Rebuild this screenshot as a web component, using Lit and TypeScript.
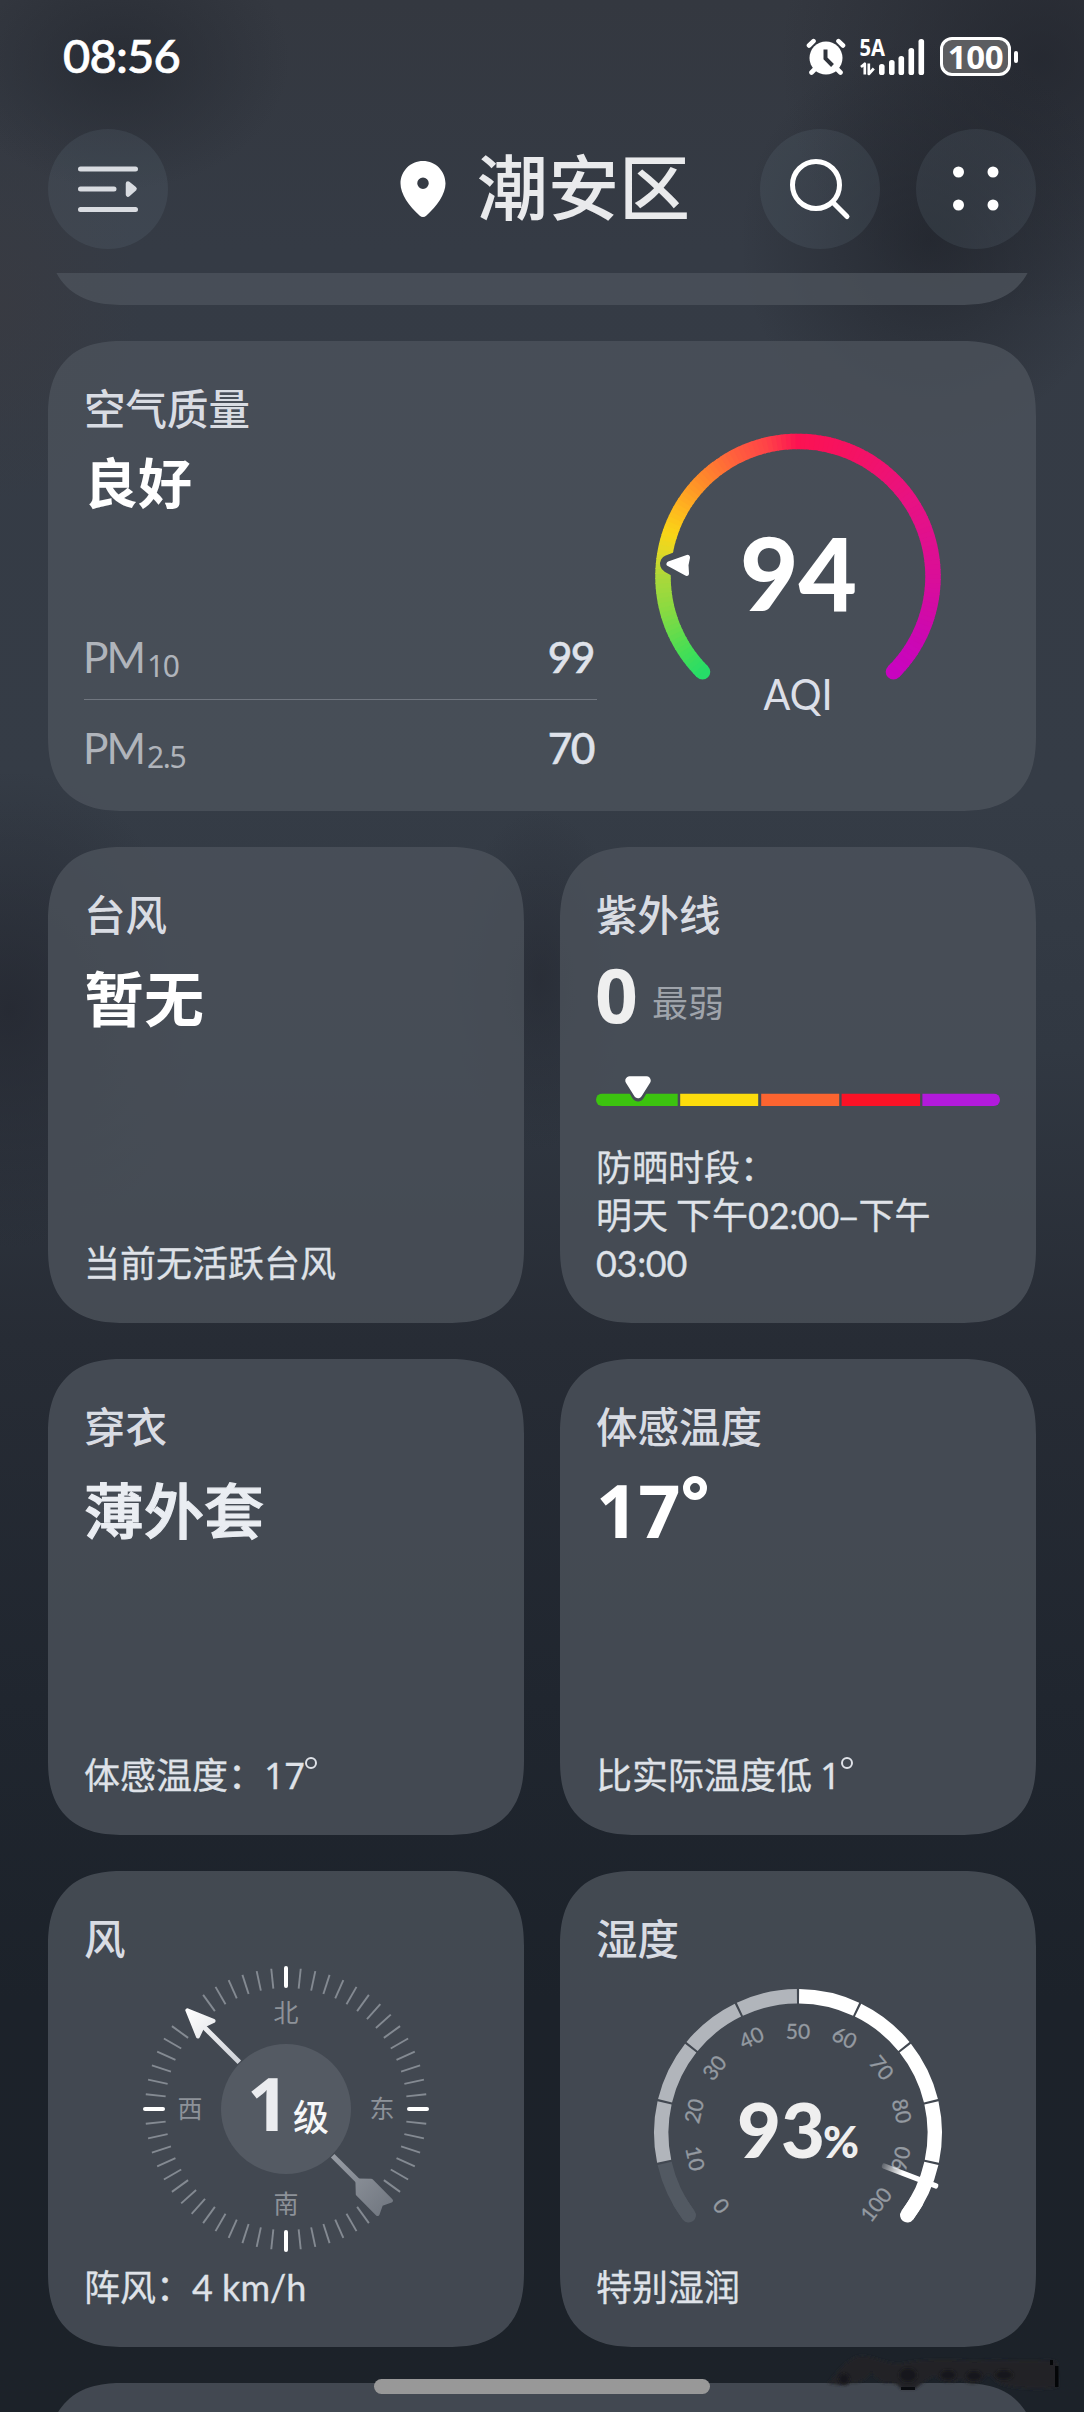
import { LitElement, html, css, svg } from "lit";
import { customElement, property } from "lit/decorators.js";

const CJK = css`"Noto Sans CJK SC", sans-serif`;

/** Point on a circle; the angle is in degrees, clockwise from north. */
const polar = (r: number, deg: number): [number, number] => {
  const a = (deg * Math.PI) / 180;
  return [r * Math.sin(a), -r * Math.cos(a)];
};

const arc = (r: number, from: number, to: number): string => {
  const [x1, y1] = polar(r, from);
  const [x2, y2] = polar(r, to);
  return `M${x1.toFixed(2)} ${y1.toFixed(2)}A${r} ${r} 0 ${to - from > 180 ? 1 : 0} 1 ${x2.toFixed(2)} ${y2.toFixed(2)}`;
};

const cardBase = css`
  .card {
    box-sizing: border-box;
    display: flex;
    flex-direction: column;
    background: rgba(76, 83, 91, 0.8);
    border-radius: 63px;
    height: 476px;
    padding: 38px 36px 38px;
  }
  @supports (corner-shape: superellipse(1.3)) {
    .card {
      border-radius: 75px;
      corner-shape: superellipse(1.3);
    }
  }
  .title {
    font-size: 41.5px;
    line-height: 56px;
    font-weight: 500;
    color: #d9dce3;
  }
  .value {
    font-size: 60px;
    line-height: 72px;
    font-weight: 700;
    color: #fff;
    margin-top: 19px;
  }
  .caption {
    font-size: 36px;
    line-height: 48px;
    color: #dfe2e8;
    margin-top: auto;
    -webkit-text-stroke: 0.3px #dfe2e8;
  }
  .digits {
    line-height: 0;
  }
`;

@customElement("status-bar")
class StatusBar extends LitElement {
  static styles = css`
    :host {
      display: flex;
      align-items: center;
      justify-content: space-between;
      height: 113px;
      padding: 0 66px 0 63px;
      color: #fff;
      box-sizing: border-box;
    }
    .time {
      font: 500 47px/60px Lato, sans-serif;
      letter-spacing: -0.8px;
      -webkit-text-stroke: 0.7px #fff;
      position: relative;
      top: -2px;
    }
    .icons {
      display: flex;
      align-items: center;
    }
    .signal {
      margin: 0 14px 0 14px;
      overflow: visible;
    }
    .net {
      font: 700 23.5px "Noto Sans", sans-serif;
    }
    .battery {
      box-sizing: border-box;
      width: 71px;
      height: 39px;
      border: 3px solid #fff;
      border-radius: 12px;
      background: #5c5d60;
      font: 700 33px/33px "Noto Sans", sans-serif;
      text-align: center;
      letter-spacing: -0.4px;
    }
    .nub {
      width: 4px;
      height: 12px;
      border-radius: 2px;
      background: #fff;
      margin-left: 3px;
    }
  `;
  render() {
    const bars = [[19, 25, 11], [29, 21, 15], [38.5, 17, 19], [48.5, 9, 27], [58.5, 0, 36]];
    return html`
      <span class="time">08:56</span>
      <div class="icons">
        <svg width="40" height="38" viewBox="0 0 40 38">
          <g stroke="#fff" stroke-width="4.6" stroke-linecap="round">
            <path d="M3 7.5L7.5 3.2M37 7.5L32.500 3.2M9 31L5.500 34.500M31 31L34.500 34.500" />
          </g>
          <circle cx="20" cy="20" r="16.500" fill="#fff" />
          <path d="M19.500 11.500V20.500L26.500 27.500" fill="none" stroke="#30343c" stroke-width="4" />
        </svg>
        <svg class="signal" width="66" height="62" viewBox="0 -12 66 62">
          <text class="net" x="-0.500" y="18" textLength="25.500" lengthAdjust="spacingAndGlyphs" fill="#fff">5A</text>
          <path d="M1 29L4.800 25.800V36.500M8.800 25.500V36L13.800 30.500" fill="none" stroke="#fff" stroke-width="2.700" stroke-linejoin="round" />
          ${bars.map(([x, y, h]) => svg`<rect x=${x} y=${y + 1} width="5.600" height=${h} rx="2.600" fill="#fff" />`)}
        </svg>
        <div class="battery">100</div>
        <div class="nub"></div>
      </div>
    `;
  }
}

@customElement("city-header")
class CityHeader extends LitElement {
  static styles = css`
    :host {
      display: flex;
      align-items: center;
      padding: 16px 48px 24px;
    }
    .round {
      width: 120px;
      height: 120px;
      border-radius: 50%;
      background: rgba(120, 140, 155, 0.14);
    }
    .city {
      flex: 1;
      display: flex;
      align-items: center;
      justify-content: flex-end;
      gap: 31px;
      margin-right: 70px;
    }
    .name {
      font: 500 71px/100px ${CJK};
      color: #e9eaec;
      position: relative;
      top: -6px;
    }
    .more {
      margin-left: 36px;
    }
    svg {
      display: block;
    }
  `;
  render() {
    return html`
      <div class="round">
        <svg width="120" height="120" viewBox="0 0 120 120">
          <path d="M32.500 40H87.500M32.500 60H66M32.500 80.500H87.500" stroke="#d9dce1" stroke-width="5" stroke-linecap="round" />
          <path d="M80 54.500L86.500 59.800L80 65.500Z" fill="#d9dce1" stroke="#d9dce1" stroke-width="4.500" stroke-linejoin="round" />
        </svg>
      </div>
      <div class="city">
        <svg width="46" height="58" viewBox="0 0 46 58">
          <path
            fill="#fff"
            fill-rule="evenodd"
            d="M23 1C10.500 1 .5 11 .5 23.500C.5 34 9 46 19.500 55.500C21.800 57.500 24.200 57.500 26.500 55.500C37 46 45.500 34 45.500 23.500C45.500 11 35.500 1 23 1ZM23 17.500A5.700 5.700 0 1 1 23 29A5.700 5.700 0 1 1 23 17.500Z"
          />
        </svg>
        <span class="name">潮安区</span>
      </div>
      <div class="round">
        <svg width="120" height="120" viewBox="0 0 120 120" fill="none" stroke="#fff" stroke-width="5" stroke-linecap="round">
          <circle cx="56" cy="56" r="23.500" />
          <path d="M73 73.500L87 87.500" />
        </svg>
      </div>
      <div class="round more">
        <svg width="120" height="120" viewBox="0 0 120 120" fill="#fff">
          <circle cx="42.500" cy="43" r="5.500" /><circle cx="77" cy="43" r="5.500" />
          <circle cx="42.500" cy="76" r="5.500" /><circle cx="77" cy="76" r="5.500" />
        </svg>
      </div>
    `;
  }
}

const AQI_STOPS: [number, number[]][] = [
  [0, [38, 220, 104]],
  [12, [72, 222, 84]],
  [30, [136, 218, 66]],
  [45, [172, 216, 58]],
  [56, [228, 216, 36]],
  [64, [250, 212, 22]],
  [76, [255, 178, 32]],
  [90, [255, 138, 42]],
  [106, [255, 98, 60]],
  [122, [255, 66, 72]],
  [135, [252, 18, 82]],
  [160, [244, 18, 100]],
  [190, [232, 18, 130]],
  [225, [218, 14, 152]],
  [250, [204, 8, 176]],
  [270, [200, 4, 192]],
];

const aqiColor = (t: number): string => {
  let i = 1;
  while (i < AQI_STOPS.length - 1 && AQI_STOPS[i][0] < t) i++;
  const [a, ca] = AQI_STOPS[i - 1];
  const [b, cb] = AQI_STOPS[i];
  const k = Math.min(1, Math.max(0, (t - a) / (b - a)));
  return `rgb(${ca.map((v, n) => Math.round(v + (cb[n] - v) * k)).join(",")})`;
};

@customElement("air-quality-card")
class AirQualityCard extends LitElement {
  static styles = [
    cardBase,
    css`
      :host {
        display: block;
        font-family: ${CJK};
      }
      .card {
        height: 470px;
        flex-direction: row;
        padding: 38px 37px 16px 36px;
      }
      .left {
        width: 513px;
        display: flex;
        flex-direction: column;
      }
      .value {
        font-size: 54px;
        line-height: 60px;
        margin-top: 16px;
      }
      .rows {
        margin-top: auto;
      }
      .row {
        display: flex;
        justify-content: space-between;
        height: 84px;
        line-height: 84px;
        padding: 0 3px 0 0;
        font-family: Lato, sans-serif;
        font-size: 42.5px;
        color: #b0b4bb;
      }
      .pm {
        letter-spacing: -2px;
        margin-left: -1px;
      }
      .row + .row {
        border-top: 1px solid #70767f;
        height: 95px;
        line-height: 95px;
      }
      .sub {
        font: 30px/30px "Noto Sans", sans-serif;
        letter-spacing: -1.3px;
        position: relative;
        top: 4px;
        margin-left: 3px;
      }
      .num {
        color: #dfe2ea;
        font-weight: 500;
        letter-spacing: -1.5px;
        -webkit-text-stroke: 0.5px #dfe2ea;
      }
      .gauge {
        flex: 1;
        display: flex;
        justify-content: center;
        margin-top: 42px;
      }
      .big {
        font: 900 101px Lato, sans-serif;
      }
      .unit {
        font: 43px Lato, sans-serif;
      }
    `,
  ];
  render() {
    const steps = Array.from({ length: 135 }, (_, i) => i * 2);
    return html`
      <div class="card">
        <div class="left">
          <div class="title">空气质量</div>
          <div class="value">良好</div>
          <div class="rows">
            <div class="row"><span class="pm">PM<span class="sub">10</span></span><span class="num">99</span></div>
            <div class="row"><span class="pm">PM<span class="sub">2.5</span></span><span class="num">70</span></div>
          </div>
        </div>
        <div class="gauge">
          <svg width="300" height="300" viewBox="-150 -155.400 300 300">
            <defs>
              <mask id="cut" maskUnits="userSpaceOnUse" x="-150" y="-150" width="300" height="300">
                <rect x="-150" y="-150" width="300" height="300" fill="#fff" />
                <path d="M-129 -12.500L-111 -19.500L-111 -2.500Z" fill="#000" stroke="#000" stroke-width="18" stroke-linejoin="round" />
              </mask>
            </defs>
            <g mask="url(#cut)" fill="none" stroke-width="15.500">
              <path d=${arc(135, -135, -134.500)} stroke=${aqiColor(0)} stroke-linecap="round" />
              <path d=${arc(135, 134.500, 135)} stroke=${aqiColor(270)} stroke-linecap="round" />
              ${steps.map((t) => svg`<path d=${arc(135, t - 135, Math.min(135, t - 132.6))} stroke=${aqiColor(t + 1)} />`)}
            </g>
            <path d="M-129 -12.500L-110.500 -19L-112 -11.500L-111.500 -3Z" fill="#fff" stroke="#fff" stroke-width="5" stroke-linejoin="round" />
            <text class="big" x="0.500" y="34.500" text-anchor="middle" fill="#fff">94</text>
            <text class="unit" x="0" y="134" text-anchor="middle" textLength="69" lengthAdjust="spacingAndGlyphs" fill="#dcdfe8">AQI</text>
          </svg>
        </div>
      </div>
    `;
  }
}

@customElement("info-card")
class InfoCard extends LitElement {
  @property() heading = "";
  @property() value = "";
  @property() caption = "";
  @property({ type: Boolean }) degrees = false;
  @property({ type: Boolean }) soft = false;
  static styles = [
    cardBase,
    css`
      :host {
        display: block;
        font-family: ${CJK};
      }
      .number {
        font-family: "Noto Sans", sans-serif;
        font-size: 74px;
        position: relative;
        top: 2px;
      }
      .soft {
        color: #eaedf2;
        font-weight: 500;
        -webkit-text-stroke: 1.2px #eaedf2;
      }
      .deg {
        display: inline-block;
        box-sizing: border-box;
        width: 24px;
        height: 24px;
        border: 7.2px solid #fff;
        border-radius: 50%;
        vertical-align: 38.5px;
        margin-left: 2px;
      }
      .small-deg {
        display: inline-block;
        box-sizing: border-box;
        width: 12px;
        height: 12px;
        border: 2.500px solid #dfe2e8;
        border-radius: 50%;
        position: relative;
        top: -20px;
        margin-left: 0;
      }
      .digits {
        font-family: "Noto Sans", sans-serif;
      }
    `,
  ];
  render() {
    const [text, digits] = this.caption.split("|");
    return html`
      <div class="card">
        <div class="title">${this.heading}</div>
        <div class="value ${this.degrees ? "number" : ""} ${this.soft ? "soft" : ""}">${this.value}${this.degrees ? html`<i class="deg"></i>` : ""}</div>
        <div class="caption">${text}${digits ? html`<span class="digits">${digits}</span><i class="small-deg"></i>` : ""}</div>
      </div>
    `;
  }
}

@customElement("uv-card")
class UvCard extends LitElement {
  static styles = [
    cardBase,
    css`
      :host {
        display: block;
        font-family: ${CJK};
      }
      .reading {
        display: flex;
        align-items: baseline;
        gap: 13px;
        margin-top: 10px;
        height: 86px;
        line-height: 86px;
      }
      .index {
        font: 700 75px/86px "Noto Sans", sans-serif;
        color: #efefef;
        margin-left: -1px;
      }
      .level {
        font-size: 36px;
        color: #9fa4ab;
        position: relative;
        top: -6px;
        left: 1px;
      }
      .scale {
        margin-top: 37px;
        display: block;
      }
      .caption {
        white-space: nowrap;
      }
      .digits {
        font-family: Lato, "Noto Sans", sans-serif;
        letter-spacing: -0.3px;
      }
    `,
  ];
  render() {
    const bands: [number, number, string][] = [
      [0, 81.7, "#3cc30f"],
      [84.2, 78, "#fcdc0c"],
      [165.2, 78, "#fc6430"],
      [245.6, 78.5, "#fb1226"],
      [326.4, 78, "#b21adb"],
    ];
    return html`
      <div class="card">
        <div class="title">紫外线</div>
        <div class="reading"><span class="index">0</span><span class="level">最弱</span></div>
        <svg class="scale" width="404" height="34" viewBox="0 0 404 34">
          <defs>
            <clipPath id="pill"><rect x="0" y="19.500" width="404" height="12.500" rx="6.200" /></clipPath>
            <mask id="notch" maskUnits="userSpaceOnUse" x="0" y="0" width="404" height="34">
              <rect width="404" height="34" fill="#fff" />
              <path d="M33.500 6.500H50.500L42 21Z" fill="#000" stroke="#000" stroke-width="13" stroke-linejoin="round" />
            </mask>
          </defs>
          <g clip-path="url(#pill)" mask="url(#notch)">
            ${bands.map(([x, w, c]) => svg`<rect x=${x} y="19.500" width=${w} height="12.500" fill=${c} />`)}
          </g>
          <path d="M33.500 6.500H50.500L42 20Z" fill="#fff" stroke="#fff" stroke-width="8.500" stroke-linejoin="round" />
        </svg>
        <div class="caption">防晒时段：<br />明天 下午<span class="digits">02:00</span>–下午<br /><span class="digits">03:00</span></div>
      </div>
    `;
  }
}

@customElement("wind-card")
class WindCard extends LitElement {
  static styles = [
    cardBase,
    css`
      :host {
        display: block;
        font-family: ${CJK};
      }
      .dial {
        display: block;
        margin-top: 1px;
      }
      .dir {
        font: 25px ${CJK};
      }
      .force {
        font: 700 74px "Noto Sans", sans-serif;
      }
      .unit {
        font: 500 36px ${CJK};
      }
      .digits {
        font-family: Lato, sans-serif;
      }
    `,
  ];
  render() {
    const hidden = [132, 138, 312, 318];
    const ticks = Array.from({ length: 60 }, (_, i) => i * 6).filter((a) => a % 90 !== 0 && !hidden.includes(a));
    return html`
      <div class="card">
        <div class="title">风</div>
        <svg class="dial" width="404" height="286" viewBox="-202 -143 404 286">
          <defs>
            <linearGradient id="head" x1="0" y1="-142" x2="0" y2="-66" gradientUnits="userSpaceOnUse">
              <stop offset="0" stop-color="#fff" /><stop offset="1" stop-color="#cfd2d8" />
            </linearGradient>
            <linearGradient id="tail" x1="0" y1="66" x2="0" y2="142" gradientUnits="userSpaceOnUse">
              <stop offset="0" stop-color="#979ca4" /><stop offset="1" stop-color="#737982" />
            </linearGradient>
          </defs>
          ${ticks.map((a) => svg`<path d="M0 -141V-121" transform="rotate(${a})" stroke="#848a92" stroke-width="1.900" />`)}
          ${[0, 90, 180, 270].map((a) => svg`<path d="M0 -141V-123" transform="rotate(${a})" stroke="#fff" stroke-width="4" stroke-linecap="round" />`)}
          <circle r="65" fill="#545a63" />
          <g transform="rotate(-45)">
            <path d="M-2.500 -66V-116H2.500V-66Z" fill="url(#head)" />
            <path d="M0 -139.500L11 -113.500L0 -117.500L-11 -113.500Z" fill="url(#head)" stroke="url(#head)" stroke-width="4" stroke-linejoin="round" />
            <path d="M-2.500 66V102H2.500V66Z" fill="url(#tail)" />
            <path d="M0 101L9.500 111V139L0 134.500L-9.500 139V111Z" fill="url(#tail)" stroke="url(#tail)" stroke-width="4" stroke-linejoin="round" />
          </g>
          <g class="dir" fill="#8d9299" text-anchor="middle">
            <text x="0" y="-87.500">北</text>
            <text x="0" y="104">南</text>
            <text x="-96" y="9">西</text>
            <text x="96" y="9">东</text>
          </g>
          <text class="force" x="-39" y="22" fill="#ebecef">1</text>
          <text class="unit" x="7" y="22" fill="#f6f7f8">级</text>
        </svg>
        <div class="caption">阵风：<span class="digits">4 km/h</span></div>
      </div>
    `;
  }
}

@customElement("humidity-card")
class HumidityCard extends LitElement {
  static styles = [
    cardBase,
    css`
      :host {
        display: block;
        font-family: ${CJK};
      }
      .dial {
        display: block;
        margin-top: 1px;
      }
      .mark {
        font: 21px Lato, sans-serif;
      }
      .big {
        font: 900 76px Lato, sans-serif;
      }
      .pct {
        font: 900 43px Lato, sans-serif;
      }
    `,
  ];
  render() {
    const STEP = 25.6;
    const R = 136.8;
    const color = (i: number) => (i === 0 ? "#525962" : i < 5 ? "#b1b5bb" : "#fff");
    const marks = Array.from({ length: 11 }, (_, i) => i);
    return html`
      <div class="card">
        <div class="title">湿度</div>
        <svg class="dial" width="404" height="286" viewBox="-202 -167 404 286">
          <defs>
            <linearGradient id="needle" x1="0" y1="-90" x2="0" y2="-112" gradientUnits="userSpaceOnUse">
              <stop offset="0" stop-color="#fff" stop-opacity="0.15" /><stop offset="1" stop-color="#fff" />
            </linearGradient>
          </defs>
          <g fill="none" stroke-width="14.400">
            <path d=${arc(R, -127, -120)} stroke=${color(0)} stroke-linecap="round" />
            <path d=${arc(R, 120, 127)} stroke=${color(9)} stroke-linecap="round" />
            ${marks.slice(0, 10).map((i) => {
              const from = -128 + i * STEP;
              return svg`<path d=${arc(R, i === 0 ? -127 : from + 0.45, i === 9 ? 127 : from + STEP - 0.45)} stroke=${color(i)} />`;
            })}
          </g>
          <g class="mark" fill="#949aa1" stroke="#949aa1" stroke-width="0.300" text-anchor="middle">
            ${marks.map((i) => {
              const a = i === 0 ? -133.5 : i === 10 ? 132.5 : (i - 5) * 26;
              const [x, y] = polar(i === 5 ? 101.5 : 106, a);
              const flip = a > 95 ? -180 : a < -95 ? 180 : 0;
              const turn = (i - 5) * STEP + flip;
              return svg`<text transform="translate(${x} ${y}) rotate(${turn})" y="7.500">${i * 10}</text>`;
            })}
          </g>
          <rect x="-2.600" y="-150" width="5.200" height="60" rx="2" transform="rotate(111)" fill="url(#needle)" />
          <text class="big" x="-61" y="25" fill="#efefef">93</text>
          <text class="pct" x="25" y="25" textLength="36" lengthAdjust="spacingAndGlyphs" fill="#efefef">%</text>
        </svg>
        <div class="caption">特别湿润</div>
      </div>
    `;
  }
}

@customElement("app-root")
class AppRoot extends LitElement {
  static styles = [
    cardBase,
    css`
      :host {
        display: block;
      }
      .screen {
        position: relative;
        width: 1084px;
        height: 2412px;
        overflow: hidden;
        display: flex;
        flex-direction: column;
        background:
          radial-gradient(ellipse 190px 200px at 930px 240px, rgba(30, 33, 40, 0.65), rgba(30, 33, 40, 0)),
          radial-gradient(ellipse 260px 260px at 1040px 60px, rgba(32, 35, 43, 0.7), rgba(32, 35, 43, 0)),
          radial-gradient(ellipse 170px 130px at 120px 60px, rgba(38, 42, 50, 0.8), rgba(38, 42, 50, 0)),
          radial-gradient(ellipse 190px 240px at 10px 1010px, rgba(36, 39, 48, 0.8), rgba(36, 39, 48, 0)),
          radial-gradient(ellipse 90px 170px at 540px 980px, rgba(36, 39, 48, 0.6), rgba(36, 39, 48, 0)),
          radial-gradient(ellipse 140px 200px at 0px 300px, rgba(58, 58, 64, 0.6), rgba(58, 58, 64, 0)),
          linear-gradient(#343840 0, #353b45 250px, #353c46 800px, #313842 1050px, #272c35 1340px, #20262f 1700px, #1c222a 2000px, #1c2229 2412px);
      }
      .scroll {
        flex: 1;
        min-height: 0;
        overflow: hidden;
        padding: 0 48px;
        display: flex;
        flex-direction: column;
        gap: 36px;
      }
      .scroll > * {
        flex-shrink: 0;
      }
      .previous {
        height: 200px;
        margin-top: -168px;
      }
      .grid {
        display: grid;
        grid-template-columns: 476px 476px;
        gap: 36px;
      }
      .home {
        position: absolute;
        left: 374px;
        top: 2379px;
        width: 336px;
        height: 15px;
        border-radius: 8px;
        background: #989898;
      }
      .smudge {
        position: absolute;
        left: 814px;
        top: 2340px;
      }
    `,
  ];
  render() {
    return html`
      <div class="screen">
        <status-bar></status-bar>
        <city-header></city-header>
        <div class="scroll">
          <div class="card previous"></div>
          <air-quality-card></air-quality-card>
          <div class="grid">
            <info-card heading="台风" value="暂无" caption="当前无活跃台风"></info-card>
            <uv-card></uv-card>
            <info-card heading="穿衣" value="薄外套" caption="体感温度：|17" soft></info-card>
            <info-card heading="体感温度" value="17" caption="比实际温度低 |1" degrees></info-card>
            <wind-card></wind-card>
            <humidity-card></humidity-card>
          </div>
          <div class="card"></div>
        </div>
        <svg class="smudge" width="270" height="72" viewBox="0 0 270 72">
          <defs><filter id="soft" x="-20%" y="-50%" width="140%" height="200%"><feGaussianBlur stdDeviation="1.500" /></filter></defs>
          <path
            filter="url(#soft)"
            fill="#212226"
            d="M14 43C22 34 30 22 42 17C55 13 70 24 86 24C110 18 140 20 160 21C185 19 215 22 236 20L243 22L244 47C225 50 205 49 190 45C182 43 178 36 174 34C170 40 162 45 155 43C148 40 146 38 143 40C136 44 128 42 121 36C114 38 106 45 101 49L87 49C84 44 80 42 74 43C66 43 62 38 57 32C53 38 46 44 38 42C30 47 20 44 14 43Z"
          />
          <g filter="url(#soft)" fill="#18191b">
            <ellipse cx="30" cy="39" rx="5.500" ry="5.500" />
            <ellipse cx="94" cy="35" rx="9" ry="7" />
            <ellipse cx="134" cy="35" rx="8" ry="5" />
            <ellipse cx="160" cy="36" rx="8" ry="5" />
            <ellipse cx="190" cy="35" rx="9" ry="5" />
          </g>
          <path d="M241 26H244.500V47H241ZM236 20H239V25H236Z" fill="#040608" />
          <path d="M87 48.500H101" stroke="#0a0c10" stroke-width="3" />
        </svg>
        <div class="home"></div>
      </div>
    `;
  }
}
